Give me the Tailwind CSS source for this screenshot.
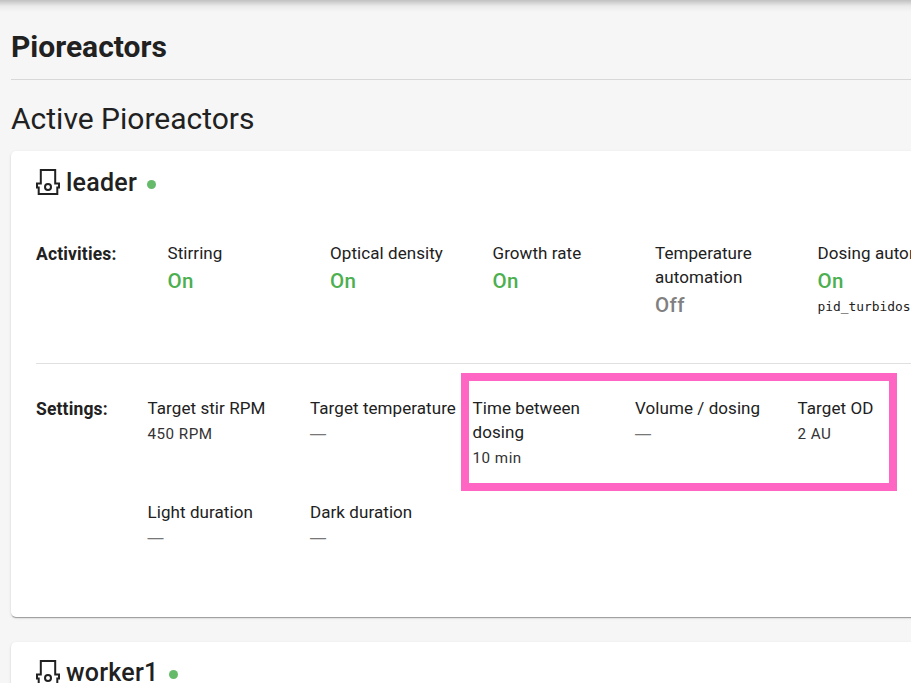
<!DOCTYPE html>
<html lang="en">
<head>
<meta charset="utf-8">
<title>Pioreactors</title>
<script src="https://cdn.jsdelivr.net/npm/@tailwindcss/browser@4"></script>
</head>
<body class="h-[683px] overflow-hidden bg-[#f6f6f6] font-['Roboto',sans-serif] text-[#212121]">
<svg class="hidden"><symbol id="reactor" viewBox="0 0 24 26"><path d="M4.8 14.5V1H19.2v13.5H23v4H21.3V25H2.7v-6.5H1v-4z" fill="none" stroke="currentColor" stroke-width="2"/><circle cx="12" cy="18" r="3" fill="none" stroke="currentColor" stroke-width="2"/></symbol></svg>
<div class="h-[683px] overflow-hidden relative">
<div class="absolute inset-x-0 top-0 h-3 bg-linear-to-b from-black/22 via-black/5 to-transparent"></div>
<main class="w-[1150px] pl-[11px] pt-[28px]">
  <h1 class="h-[51px] text-[30px] leading-[38px] font-bold">Pioreactors</h1>
  <hr class="border-[#d8d8d8]">
  <h2 class="h-[71px] pt-[19px] text-[30px] leading-[40px] font-normal">Active Pioreactors</h2>
  <section class="h-[466px] rounded-[5px] bg-white px-[25px] pt-[14px] shadow-[0_2px_1px_-1px_rgba(0,0,0,0.2),0_1px_1px_rgba(0,0,0,0.14),0_1px_3px_rgba(0,0,0,0.12)]">
    <div class="flex h-[36px] items-center">
      <svg class="mb-[2px] h-[26px] w-6"><use href="#reactor"/></svg>
      <h3 class="ml-[6px] text-[25px] leading-[36px] font-medium tracking-[0.25px]">leader</h3>
      <span class="ml-[10px] mt-[3px] size-[9px] rounded-full bg-[#66bb6a]"></span>
    </div>
    <div class="mt-[40px] flex h-[122px] text-[17px] leading-6 tracking-[0.07px]">
      <div class="w-[131.5px] shrink-0 pt-px font-bold text-[17.5px] tracking-[0.15px]">Activities:</div>
      <div class="grid grid-cols-[repeat(5,162.5px)]">
        <div><p>Stirring</p><p class="mt-[4px] text-[20.5px] font-medium tracking-[0.5px] text-[#4caf50]">On</p></div>
        <div><p>Optical density</p><p class="mt-[4px] text-[20.5px] font-medium tracking-[0.5px] text-[#4caf50]">On</p></div>
        <div><p>Growth rate</p><p class="mt-[4px] text-[20.5px] font-medium tracking-[0.5px] text-[#4caf50]">On</p></div>
        <div><p>Temperature<br>automation</p><p class="mt-[4px] text-[20.5px] font-medium tracking-[0.5px] text-[#808080]">Off</p></div>
        <div class="whitespace-nowrap"><p>Dosing automation</p><p class="mt-[4px] text-[20.5px] font-medium tracking-[0.5px] text-[#4caf50]">On</p><p class="mt-[2px] font-['DejaVu_Sans_Mono',monospace] text-[12.9px] leading-6 tracking-normal">pid_turbidostat</p></div>
      </div>
    </div>
    <hr class="border-[#e0e0e0]">
    <div class="mt-[32px] flex text-[17px] leading-6 tracking-[0.07px]">
      <div class="w-[111.5px] shrink-0 pt-px font-bold text-[17.5px] tracking-[0.15px]">Settings:</div>
      <div class="relative grid grid-cols-[repeat(5,162.5px)] auto-rows-[104px]">
        <div><p class="whitespace-nowrap">Target stir RPM</p><p class="mt-[2px] text-[15.2px] tracking-[0.5px] text-[#333]">450 RPM</p></div>
        <div><p class="whitespace-nowrap">Target temperature</p><p class="mt-[2px] text-[16px] font-['Liberation_Sans',sans-serif] text-[#777]">—</p></div>
        <div><p>Time between<br>dosing</p><p class="mt-[2px] text-[15.2px] tracking-[0.5px] text-[#333]">10 min</p></div>
        <div><p>Volume / dosing</p><p class="mt-[2px] text-[16px] font-['Liberation_Sans',sans-serif] text-[#777]">—</p></div>
        <div><p>Target OD</p><p class="mt-[2px] text-[15.2px] tracking-[0.5px] text-[#333]">2 AU</p></div>
        <div><p>Light duration</p><p class="mt-[2px] text-[16px] font-['Liberation_Sans',sans-serif] text-[#777]">—</p></div>
        <div><p>Dark duration</p><p class="mt-[2px] text-[16px] font-['Liberation_Sans',sans-serif] text-[#777]">—</p></div>
        <div class="absolute -top-[23px] left-[313.5px] h-[118px] w-[436px] border-8 border-[#ff66c4]"></div>
      </div>
    </div>
  </section>
  <section class="mt-[25px] h-[466px] rounded-[5px] bg-white px-[25px] pt-[13px] shadow-[0_2px_1px_-1px_rgba(0,0,0,0.2),0_1px_1px_rgba(0,0,0,0.14),0_1px_3px_rgba(0,0,0,0.12)]">
    <div class="flex h-[36px] items-center">
      <svg class="mb-px h-[26px] w-6"><use href="#reactor"/></svg>
      <h3 class="ml-[6px] text-[25px] leading-[36px] font-medium tracking-[0.25px]">worker1</h3>
      <span class="ml-[10px] mt-[3px] size-[9px] rounded-full bg-[#66bb6a]"></span>
    </div>
  </section>
</main>
</div>
</body>
</html>
